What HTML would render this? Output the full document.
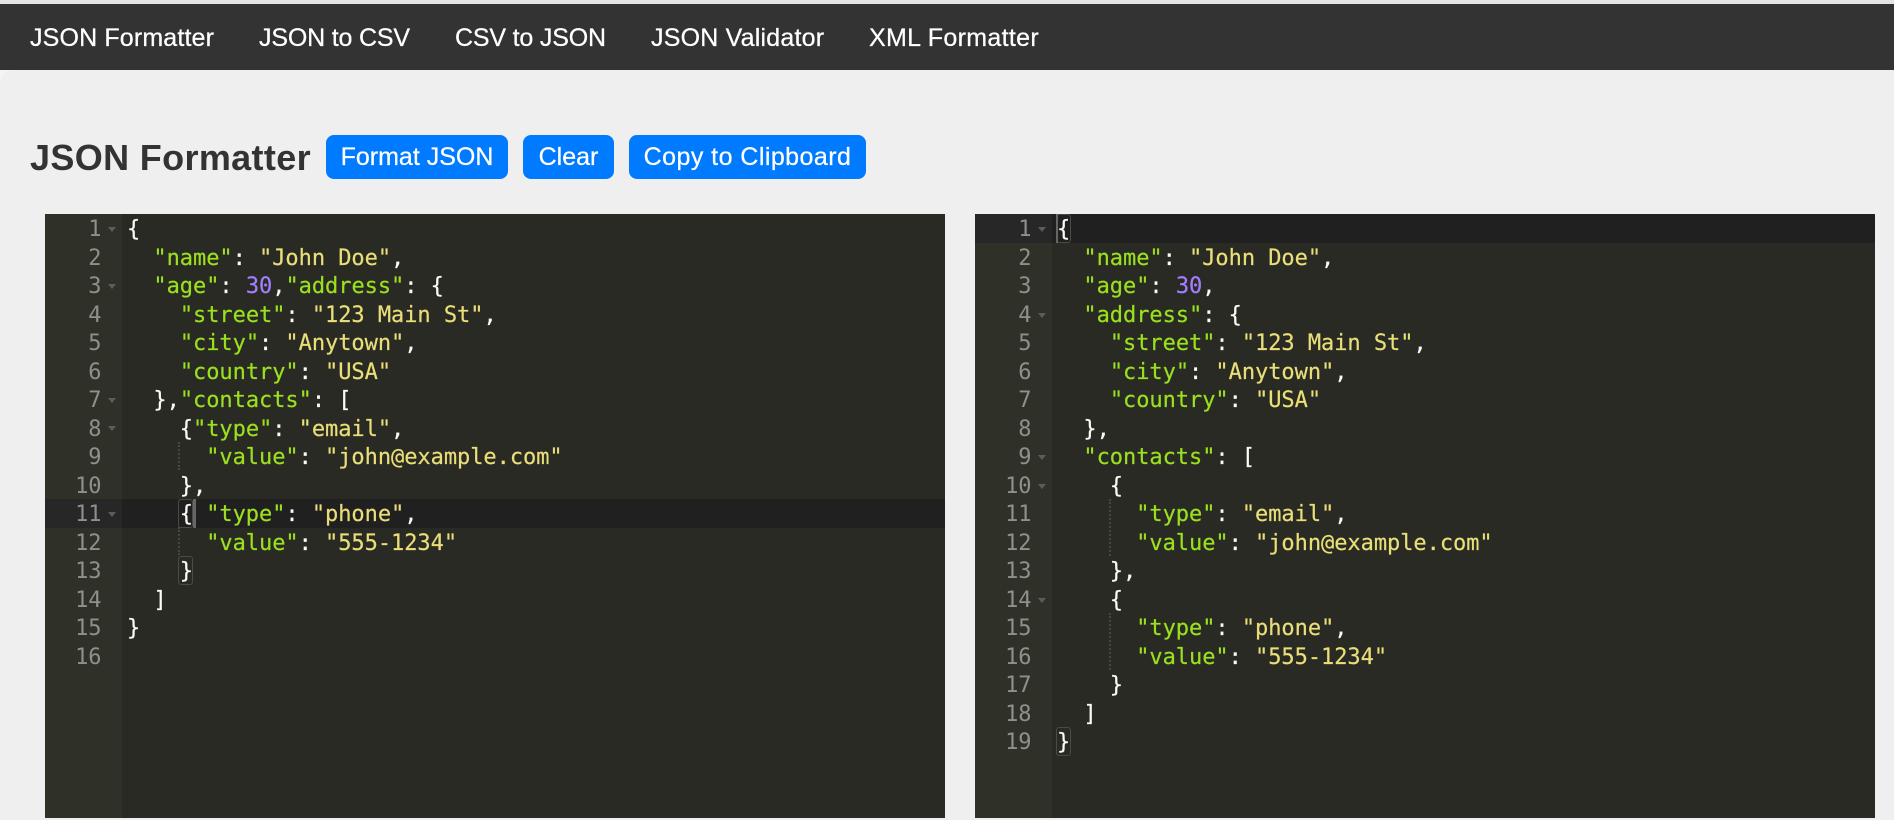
<!DOCTYPE html>
<html><head><meta charset="utf-8"><style>
html,body{margin:0;padding:0;width:1894px;height:820px;overflow:hidden;background:#f4f4f4;font-family:"Liberation Sans",sans-serif}
.abs,.nav a,.btn,h1,.ed{position:absolute}
.top{position:absolute;left:0;top:0;width:1894px;height:4px;background:#e4e4e4}
.nav{position:absolute;left:0;top:4px;width:1894px;height:66px;background:#333}
.nav a{top:2px;line-height:64px;color:#fff;font-size:25px;white-space:nowrap;-webkit-text-stroke:.25px #fff}
.main{position:absolute;left:0;top:70px;width:1894px;height:750px;background:#efefef;border-top-left-radius:14px}
h1{margin:0;left:30px;top:135px;line-height:46px;font-size:36px;font-weight:700;letter-spacing:.35px;color:#333;white-space:nowrap}
.btn{top:135px;height:44px;line-height:45px;background:#007bff;color:#fff;border-radius:8px;font-size:25px;text-align:center;white-space:nowrap;-webkit-text-stroke:.25px #fff}
.ed{top:214px;width:900px;height:604px;background:#292a24;overflow:hidden}
.gut{position:absolute;left:0;top:0;width:77px;height:604px;background:#2f3129}
.act{position:absolute;left:0;width:900px;height:28.5px;background:#202020}
.actg{position:absolute;left:0;width:77px;height:28.5px;background:#272727}
pre{position:absolute;margin:0;top:2.4px;font:22px/28.5px "DejaVu Sans Mono",monospace;letter-spacing:-.045px;color:#fbfbf6;-webkit-text-stroke:.2px}
.nums{left:0;width:56.5px;text-align:right;color:#8f908a;-webkit-text-stroke:0}
.code{left:82px}
.k{color:#9ae01f}.s{color:#e9de78}.n{color:#a47dff}
.f{position:absolute;left:63px;width:0;height:0;border-left:4.5px solid transparent;border-right:4.5px solid transparent;border-top:5px solid #5c5d58}
.g{position:absolute;width:0;border-left:2px dotted #46473f}
.b{position:absolute;box-sizing:border-box;width:15px;height:28.5px;border:1px solid #4a4b42;border-radius:3px}
.c{position:absolute;width:3px;height:28.5px;background:#666}
</style></head><body>
<div class="top"></div>
<div class="nav">
<a style="left:30px;letter-spacing:.15px">JSON Formatter</a>
<a style="left:259px;letter-spacing:-.18px">JSON to CSV</a>
<a style="left:455px;letter-spacing:-.18px">CSV to JSON</a>
<a style="left:651px;letter-spacing:.2px">JSON Validator</a>
<a style="left:869px;letter-spacing:.33px">XML Formatter</a>
</div>
<div class="main"></div>
<h1>JSON Formatter</h1>
<div class="btn" style="left:326px;width:182px">Format JSON</div>
<div class="btn" style="left:523px;width:91px">Clear</div>
<div class="btn" style="left:629px;width:237px;letter-spacing:.45px">Copy to Clipboard</div>

<div class="ed" style="left:45px">
<div class="gut"></div>
<div class="act" style="top:285px"></div><div class="actg" style="top:285px"></div>
<pre class="nums">1
2
3
4
5
6
7
8
9
10
11
12
13
14
15
16</pre>
<i class="f" style="top:13px"></i><i class="f" style="top:70px"></i><i class="f" style="top:184px"></i><i class="f" style="top:212px"></i><i class="f" style="top:298px"></i>
<i class="g" style="left:133px;top:228px;height:28px"></i>
<i class="g" style="left:133px;top:313px;height:28px"></i>
<i class="b" style="left:133px;top:285px"></i>
<i class="b" style="left:133px;top:342px"></i>
<i class="c" style="left:148px;top:285px"></i>
<pre class="code">{
  <span class="k">"name"</span>: <span class="s">"John Doe"</span>,
  <span class="k">"age"</span>: <span class="n">30</span>,<span class="k">"address"</span>: {
    <span class="k">"street"</span>: <span class="s">"123 Main St"</span>,
    <span class="k">"city"</span>: <span class="s">"Anytown"</span>,
    <span class="k">"country"</span>: <span class="s">"USA"</span>
  },<span class="k">"contacts"</span>: [
    {<span class="k">"type"</span>: <span class="s">"email"</span>,
      <span class="k">"value"</span>: <span class="s">"john@example.com"</span>
    },
    { <span class="k">"type"</span>: <span class="s">"phone"</span>,
      <span class="k">"value"</span>: <span class="s">"555-1234"</span>
    }
  ]
}</pre>
</div>

<div class="ed" style="left:975px">
<div class="gut"></div>
<div class="act" style="top:0"></div><div class="actg" style="top:0"></div>
<pre class="nums">1
2
3
4
5
6
7
8
9
10
11
12
13
14
15
16
17
18
19</pre>
<i class="f" style="top:13px"></i><i class="f" style="top:99px"></i><i class="f" style="top:241px"></i><i class="f" style="top:270px"></i><i class="f" style="top:384px"></i>
<i class="g" style="left:134px;top:285px;height:57px"></i>
<i class="g" style="left:134px;top:399px;height:57px"></i>
<i class="b" style="left:81px;top:0"></i>
<i class="b" style="left:81px;top:513px"></i>
<i class="c" style="left:81px;top:0;width:2px"></i>
<pre class="code">{
  <span class="k">"name"</span>: <span class="s">"John Doe"</span>,
  <span class="k">"age"</span>: <span class="n">30</span>,
  <span class="k">"address"</span>: {
    <span class="k">"street"</span>: <span class="s">"123 Main St"</span>,
    <span class="k">"city"</span>: <span class="s">"Anytown"</span>,
    <span class="k">"country"</span>: <span class="s">"USA"</span>
  },
  <span class="k">"contacts"</span>: [
    {
      <span class="k">"type"</span>: <span class="s">"email"</span>,
      <span class="k">"value"</span>: <span class="s">"john@example.com"</span>
    },
    {
      <span class="k">"type"</span>: <span class="s">"phone"</span>,
      <span class="k">"value"</span>: <span class="s">"555-1234"</span>
    }
  ]
}</pre>
</div>
</body></html>
